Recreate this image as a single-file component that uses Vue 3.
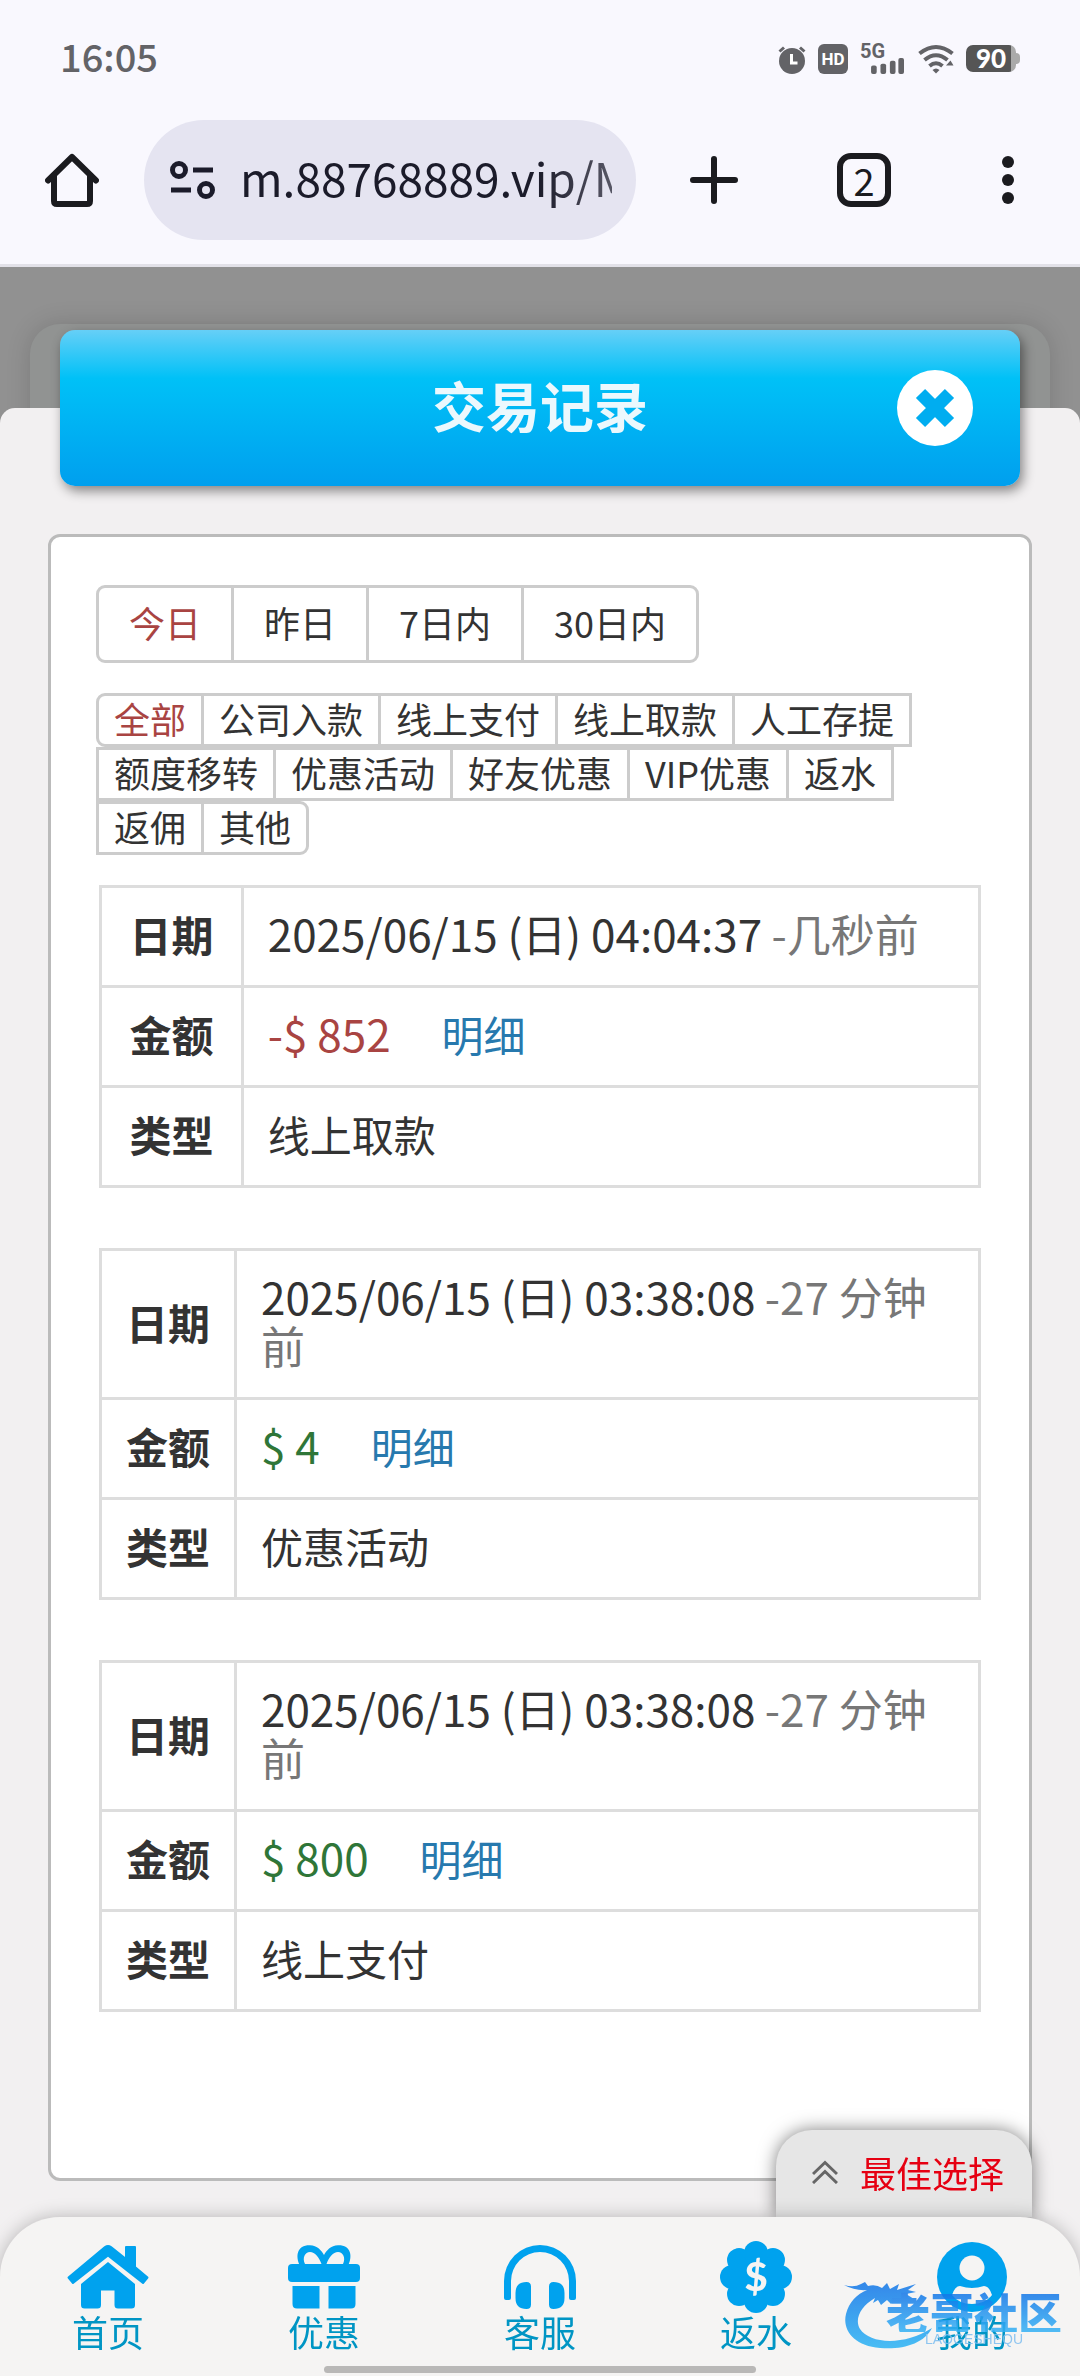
<template>
  <div class="page">
    <header class="browser">
      <div class="status-bar">
        <span class="clock">16:05</span>
        <div class="status-icons">
          <svg class="icon-alarm" viewBox="0 0 28 30" aria-hidden="true">
            <circle cx="14" cy="17" r="13" />
            <path d="M1.5 7.5 6 3.5M26.5 7.5 22 3.5" class="alarm-bell" />
            <path d="M13.5 10v9h6" class="alarm-hand" />
          </svg>
          <span class="hd">HD</span>
          <span class="signal">
            <span class="signal-type">5G</span>
            <svg class="signal-bars" viewBox="0 0 36 17" aria-hidden="true">
              <rect x="0" y="8" width="6" height="9" rx="2" />
              <rect x="10" y="6" width="6" height="11" rx="2" />
              <rect x="20" y="3" width="6" height="14" rx="2" />
              <rect x="29" y="0" width="6" height="17" rx="2" />
            </svg>
          </span>
          <svg class="icon-wifi" viewBox="0 0 36 30" aria-hidden="true">
            <path d="M1.5 9.5Q18-3.500 34.500 9.500M6.500 16Q18 6.500 29.500 16M11.500 22Q18 16.500 24.500 22" />
            <path d="M14.500 26Q18 23 21.500 26L18 29.500Z" class="solid" />
            <path d="M28 21.500 32.500 16.500 35.500 21.500Z" class="solid" />
          </svg>
          <span class="battery">90</span>
        </div>
      </div>

      <div class="toolbar">
        <button class="tool" type="button" aria-label="主页">
          <svg viewBox="0 0 54 54" fill="none" stroke="#1b1b1f" stroke-width="6" stroke-linecap="round" stroke-linejoin="round">
            <path d="M3 27.500 27 4 51 27.500" />
            <path d="M9 22.500V48q0 3 3 3h30q3 0 3-3V22.500" />
          </svg>
        </button>
        <div class="address">
          <svg class="tune" viewBox="0 0 48 48" fill="none" stroke="#1b1b2a" stroke-width="5" aria-hidden="true">
            <circle cx="11" cy="14" r="6.500" />
            <path d="M25 14h20M3 34h20" />
            <circle cx="38" cy="34" r="6.500" />
          </svg>
          <input v-model="url" class="url" type="text" aria-label="网址" />
        </div>
        <button class="tool" type="button" aria-label="新标签页">
          <svg viewBox="0 0 54 54" stroke="#1b1b1f" stroke-width="6" stroke-linecap="round">
            <path d="M27 6v42M6 27h42" />
          </svg>
        </button>
        <button class="tool tabs" type="button">2</button>
        <button class="tool more" type="button" aria-label="更多">
          <svg viewBox="0 0 42 54" fill="#1b1b1f">
            <circle cx="21" cy="9" r="6" />
            <circle cx="21" cy="27" r="6" />
            <circle cx="21" cy="45" r="6" />
          </svg>
        </button>
      </div>
    </header>

    <main class="backdrop">
      <section class="sheet">
        <div class="title-bar">
          <h1>交易记录</h1>
          <button class="close" type="button" aria-label="关闭">
            <svg viewBox="0 0 76 76">
              <circle cx="38" cy="38" r="38" fill="#fff" />
              <path d="M23.500 23.500l29 29M52.500 23.500l-29 29" stroke="#00adf0" stroke-width="13" />
            </svg>
          </button>
        </div>

        <div class="card">
          <div class="ranges">
            <button
              v-for="item in ranges"
              :key="item"
              type="button"
              :class="{ active: item === activeRange }"
              @click="activeRange = item"
            >{{ item }}</button>
          </div>

          <div class="types">
            <button
              v-for="item in types"
              :key="item"
              type="button"
              :class="{ active: item === activeType }"
              @click="activeType = item"
            >{{ item }}</button>
          </div>

          <table v-for="(record, index) in records" :key="index" class="record">
            <tbody>
              <tr>
                <th scope="row">日期</th>
                <td><span class="num">{{ record.date }}</span> <span class="num ago">-{{ record.ago }}</span></td>
              </tr>
              <tr>
                <th scope="row">金额</th>
                <td>
                  <span class="num" :class="record.out ? 'minus' : 'plus'">{{ record.amount }}</span>
                  <a href="#" class="detail" @click.prevent>明细</a>
                </td>
              </tr>
              <tr>
                <th scope="row">类型</th>
                <td>{{ record.type }}</td>
              </tr>
            </tbody>
          </table>
        </div>
      </section>
    </main>

    <footer class="dock">
      <button class="best" type="button">
        <svg viewBox="0 0 26 24" fill="none" stroke="#666" stroke-width="3" aria-hidden="true">
          <path d="M1 14 13 2.500 25 14M1 23 13 11.500 25 23" />
        </svg>
        最佳选择
      </button>

      <nav class="nav">
        <a href="#" @click.prevent>
          <svg class="wide" viewBox="0 0 84 72" stroke-width="2" stroke-linejoin="round">
            <path d="M39 6Q42 4 45 6L60 18V6H69V26L81.500 36.500 77 42 42 14.500 7 42 2.500 36.500Z" stroke="#00a2ee" />
            <path d="M42 21 69 43V64q0 3.500-3.500 3.500H52q-3.500 0-3.500-3.500V49.500H35V64q0 3.500-3.500 3.500H18.500Q15 67.500 15 64V43Z" />
          </svg>
          <span>首页</span>
        </a>
        <a href="#" @click.prevent>
          <svg viewBox="0 0 72 72">
            <path fill-rule="evenodd" d="M12 25C7 15 9 4 22 4.300 29 4.300 34 10 36 14 38 10 43 4.300 50 4.300 63 4 65 15 60 25ZM17 23H33.500C31 16 27 11 22 11 17 11 14 17 17 23ZM38.500 23H55C58 17 55 11 50 11 45 11 41 16 38.500 23Z" />
            <rect x="0" y="23" width="72" height="18" rx="4" />
            <path d="M4.500 45H31.500V67.500H9Q4.500 67.500 4.500 63ZM40.500 45H67.500V63Q67.500 67.500 63 67.500H40.500Z" />
          </svg>
          <span>优惠</span>
        </a>
        <a href="#" @click.prevent>
          <svg viewBox="0 0 72 72">
            <path d="M0 40a36 36 0 0 1 72 0V57q0 2-2 2H67q-2 0-2-2V40a29 29 0 0 0-58 0V57q0 2-2 2H2q-2 0-2-2Z" />
            <path d="M11.500 52q0-11 11-11 4.500 0 4.500 4.500V63.500Q27 68 22.500 68 11.500 68 11.500 57ZM60.500 52q0-11-11-11-4.500 0-4.500 4.500V63.500Q45 68 49.500 68 60.500 68 60.500 57Z" />
          </svg>
          <span>客服</span>
        </a>
        <a href="#" @click.prevent>
          <svg viewBox="0 0 72 72">
            <circle cx="36" cy="36" r="26" />
            <circle v-for="n in 8" :key="n" cx="36" cy="12" r="12" :transform="`rotate(${n * 45} 36 36)`" />
            <text x="36" y="50" class="dollar">$</text>
          </svg>
          <span>返水</span>
        </a>
        <a href="#" @click.prevent>
          <svg viewBox="0 0 72 72">
            <circle cx="36" cy="36" r="35" />
            <circle cx="36" cy="27" r="12.500" fill="#f5f4f3" />
            <path d="M24 45Q36 49 48 45 53 45 56 54 49 63 36 63 23 63 16 54 19 45 24 45Z" fill="#f5f4f3" />
          </svg>
          <span>我的</span>
        </a>

        <div class="brand">
          <svg viewBox="0 0 90 70" aria-hidden="true">
            <defs>
              <linearGradient id="brand-fill" x1="0" y1="0" x2="0" y2="1">
                <stop offset="0" stop-color="#1275e8" />
                <stop offset="1" stop-color="#2bb4f5" />
              </linearGradient>
            </defs>
            <path
              fill="url(#brand-fill)"
              d="M0 5Q10 8 17 4L21 2 24 6Q32 4 38 8L43 3 46 9 55 4 53 10 72 4 64 10 72 12 62 14 70 19 59 18 63 23 52 20 47 24 43 20 37 25 34 20 29 23 31 18C17 26 10 39 16 49 26 64 60 66 88 48 80 64 58 70 36 68 10 66-2 50 2 34 5 22 13 14 23 10Q11 11 0 5Z"
            />
          </svg>
          <div class="brand-text">
            <strong>老哥社区</strong>
            <small>LAOGESHEQU</small>
          </div>
        </div>
        <i class="home-indicator"></i>
      </nav>
    </footer>
  </div>
</template>

<script setup>
import { ref } from 'vue';

const url = ref('m.88768889.vip/M');

const ranges = ['今日', '昨日', '7日内', '30日内'];
const activeRange = ref('今日');

const types = [
  '全部', '公司入款', '线上支付', '线上取款', '人工存提',
  '额度移转', '优惠活动', '好友优惠', 'VIP优惠', '返水',
  '返佣', '其他',
];
const activeType = ref('全部');

const records = [
  { date: '2025/06/15 (日) 04:04:37', ago: '几秒前', amount: '-$ 852', out: true, type: '线上取款' },
  { date: '2025/06/15 (日) 03:38:08', ago: '27 分钟前', amount: '$ 4', out: false, type: '优惠活动' },
  { date: '2025/06/15 (日) 03:38:08', ago: '27 分钟前', amount: '$ 800', out: false, type: '线上支付' },
];
</script>

<style>
body {
  margin: 0;
}
</style>

<style scoped>
.page {
  display: flex;
  flex-direction: column;
  min-height: 100vh;
  background: #919191;
  color: #333;
  font-family: "Noto Sans CJK SC", sans-serif;
  font-size: 42px;
}

button,
input {
  margin: 0;
  padding: 0;
  border: 0;
  background: none;
  color: inherit;
  font: inherit;
}

a {
  text-decoration: none;
}

svg {
  display: block;
}

/* browser chrome */
.browser {
  background: #f9f8fe;
  border-bottom: 3px solid #e2e1e8;
}

.status-bar {
  display: flex;
  align-items: center;
  justify-content: space-between;
  box-sizing: border-box;
  height: 120px;
  padding: 0 64px 3px 60px;
  color: #636367;
}

.clock {
  padding-bottom: 6px;
  font-size: 38px;
  font-weight: 500;
}

.status-icons {
  display: flex;
  align-items: center;
  gap: 12px;
}

.icon-alarm {
  width: 28px;
  height: 30px;
  fill: #636367;
}

.alarm-bell {
  stroke: #636367;
  stroke-width: 3;
}

.alarm-hand {
  fill: none;
  stroke: #fff;
  stroke-width: 3;
}

.hd {
  width: 30px;
  height: 30px;
  border-radius: 6px;
  background: #636367;
  color: #fff;
  font: bold 17px/30px Roboto, sans-serif;
  text-align: center;
}

.signal {
  display: flex;
  flex-direction: column;
  width: 46px;
  height: 30px;
}

.signal-type {
  font: bold 20px/14px Roboto, sans-serif;
}

.signal-bars {
  align-self: flex-end;
  width: 36px;
  height: 17px;
  fill: #636367;
}

.icon-wifi {
  width: 36px;
  height: 30px;
  fill: none;
  stroke: #636367;
  stroke-width: 4;
}

.icon-wifi .solid {
  fill: #636367;
  stroke: none;
}

.battery {
  position: relative;
  width: 50px;
  height: 27px;
  border-radius: 7px;
  background: linear-gradient(to right, #555 90%, #aaa 90%);
  color: #fff;
  font: 900 26px/27px Lato, sans-serif;
  text-align: center;
}

.battery::after {
  content: "";
  position: absolute;
  top: 8px;
  right: -4px;
  width: 4px;
  height: 11px;
  border-radius: 0 4px 4px 0;
  background: #aaa;
}

.toolbar {
  display: flex;
  align-items: center;
  padding: 0 51px 24px 45px;
}

.tool {
  width: 54px;
  height: 54px;
}

.address {
  display: flex;
  flex: 1;
  align-items: center;
  gap: 24px;
  min-width: 0;
  height: 120px;
  box-sizing: border-box;
  margin: 0 51px 0 45px;
  padding: 0 24px;
  border-radius: 60px;
  background: #e5e4f1;
}

.tune {
  flex: none;
  width: 48px;
  height: 48px;
}

.url {
  flex: 1;
  min-width: 0;
  padding-bottom: 6px;
  color: #1b1b2a;
  font-size: 46px;
  outline: none;
  mask-image: linear-gradient(to right, #000 80%, rgba(0, 0, 0, 0.7));
}

.tabs {
  box-sizing: border-box;
  margin: 0 96px;
  border: 6px solid #1b1b1f;
  border-radius: 14px;
  color: #1b1b1f;
  font-size: 38px;
  line-height: 36px;
}

.more {
  width: 42px;
}

/* dialog */
.backdrop {
  position: relative;
  display: flex;
  flex: 1;
  flex-direction: column;
  padding-top: 141px;
}

.backdrop::before {
  content: "";
  position: absolute;
  top: 57px;
  right: 30px;
  left: 30px;
  height: 120px;
  border-radius: 30px 30px 0 0;
  background: #919392;
  box-shadow: 0 0 24px rgba(0, 0, 0, 0.15);
}

.sheet {
  position: relative;
  display: flex;
  flex: 1;
  flex-direction: column;
  border-radius: 15px 15px 0 0;
  background: #f2f0f1;
}

.title-bar {
  position: relative;
  display: flex;
  align-items: center;
  justify-content: center;
  height: 156px;
  margin: -78px 60px 0;
  border-radius: 15px;
  background: linear-gradient(#66cff7, #00c1f7 31%, #009fee);
  box-shadow: 3px 5px 12px rgba(0, 0, 0, 0.45);
}

h1 {
  margin: 0;
  padding-bottom: 6px;
  color: #ebf8fd;
  font-size: 54px;
  line-height: 78px;
}

.close {
  position: absolute;
  top: 40px;
  right: 47px;
  width: 76px;
  height: 76px;
}

.card {
  flex: 1;
  margin: 48px 48px 195px;
  padding: 48px 45px;
  border: 3px solid #bbb;
  border-radius: 12px;
  background: #fff;
}

.ranges,
.types {
  display: flex;
  flex-wrap: wrap;
  margin-bottom: 30px;
  font-size: 36px;
}

.ranges button,
.types button {
  margin-right: -3px;
  border: 3px solid #ccc;
}

.ranges button {
  padding: 0 30px 4px;
  line-height: 68px;
}

.types button {
  padding: 0 15px 4px;
  line-height: 44px;
}

.ranges button:first-child,
.types button:first-child {
  border-radius: 9px 0 0 9px;
}

.ranges button:last-child,
.types button:last-child {
  border-radius: 0 9px 9px 0;
}

.active {
  color: #a94442;
}

.record {
  width: calc(100% - 6px);
  margin: 0 3px 60px;
  border-collapse: collapse;
  line-height: 49px;
}

.record th,
.record td {
  padding: 21px 24px 27px;
  border: 3px solid #ddd;
  text-align: left;
}

.record th {
  text-align: center;
  white-space: nowrap;
}

.num {
  font-size: 44px;
  line-height: 44px;
}

.ago {
  color: #777;
}

.minus {
  color: #a94442;
}

.plus {
  color: #2f7638;
}

.detail {
  margin-left: 42px;
  padding-left: 9px;
  color: #2779ae;
}

/* bottom dock */
.dock {
  position: fixed;
  right: 0;
  bottom: 0;
  left: 0;
  display: flex;
  flex-direction: column;
}

.best {
  display: flex;
  align-items: center;
  align-self: flex-end;
  gap: 22px;
  box-sizing: border-box;
  height: 87px;
  margin-right: 48px;
  padding: 0 28px 3px 36px;
  border-radius: 36px 36px 0 0;
  background: #e6e6e6;
  box-shadow: 0 0 18px rgba(0, 0, 0, 0.5);
  color: #e60012;
  font-size: 36px;
}

.best svg {
  width: 26px;
  height: 24px;
}

.nav {
  position: relative;
  display: flex;
  padding: 24px 0 27px;
  border-radius: 60px 60px 0 0;
  background: #f5f4f3;
  box-shadow: 0 0 18px rgba(0, 0, 0, 0.25);
}

.nav a {
  display: flex;
  flex: 1;
  flex-direction: column;
  align-items: center;
  color: #0095c4;
  font-size: 36px;
  line-height: 36px;
}

.nav a svg {
  width: 72px;
  height: 72px;
  fill: #00a2ee;
}

.nav a .wide {
  width: 84px;
}

.dollar {
  fill: #f5f4f3;
  font: 900 40px Lato, sans-serif;
  text-anchor: middle;
}

.brand {
  position: absolute;
  top: 63px;
  right: 18px;
  display: flex;
  color: #2189ef;
  opacity: 0.85;
  pointer-events: none;
}

.brand > svg {
  width: 90px;
  height: 70px;
}

.brand-text {
  display: flex;
  flex-direction: column;
  align-items: center;
  margin: 12px 0 0 -48px;
}

.brand-text strong {
  background: linear-gradient(#1275e8, #35b2f5);
  background-clip: text;
  color: transparent;
  font-size: 44px;
  font-weight: 900;
  line-height: 40px;
}

.brand-text small {
  color: #7cbdf0;
  font: 14px/14px "Liberation Sans", sans-serif;
}

.home-indicator {
  position: absolute;
  bottom: 3px;
  left: 30%;
  width: 40%;
  height: 7px;
  border-radius: 4px;
  background: #b9b8b7;
}
</style>
